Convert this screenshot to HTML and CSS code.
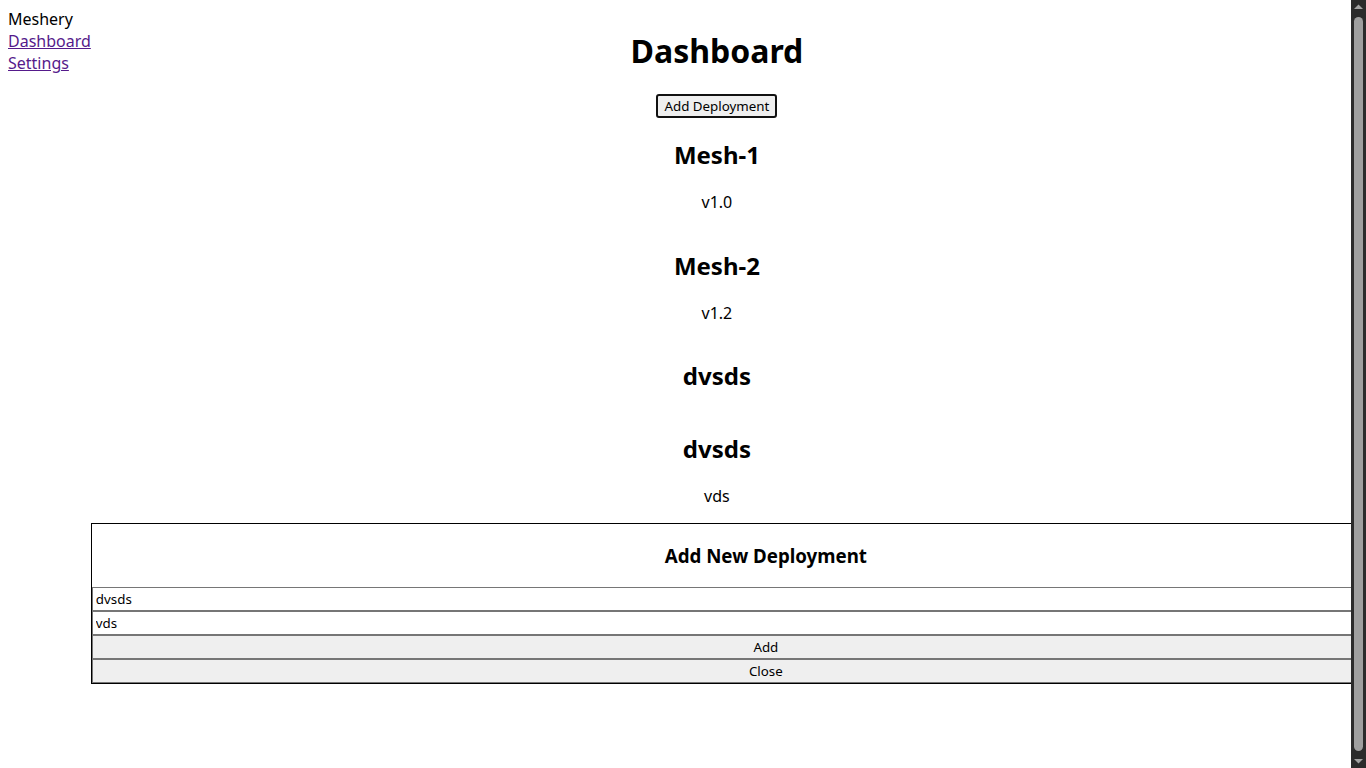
FILE: index.html
```html
<!DOCTYPE html>
<html lang="en">
<head>
<meta charset="utf-8">
<title>Meshery</title>
<link rel="stylesheet" href="styles.css">
</head>
<body>
<div class="layout">
  <nav class="sidebar">
    <div class="brand">Meshery</div>
    <a class="nav-link" href="#">Dashboard</a>
    <a class="nav-link" href="#">Settings</a>
  </nav>
  <main class="main">
    <h1 class="title">Dashboard</h1>
    <div class="actions"><button class="btn-add" type="button">Add Deployment</button></div>
    <div class="list">
      <div class="item"><h2>Mesh-1</h2><p>v1.0</p></div>
      <div class="item"><h2>Mesh-2</h2><p>v1.2</p></div>
      <div class="item"><h2>dvsds</h2><p></p></div>
      <div class="item"><h2>dvsds</h2><p>vds</p></div>
    </div>
    <div class="modal">
      <h3>Add New Deployment</h3>
      <input class="field" type="text" value="dvsds">
      <input class="field" type="text" value="vds">
      <button class="wide-btn" type="button">Add</button>
      <button class="wide-btn" type="button">Close</button>
    </div>
  </main>
</div>
<div class="scrollbar" aria-hidden="true">
  <svg class="arrow" width="15" height="15" viewBox="0 0 15 15"><path d="M3 9 L7.5 4.5 L12 9 Z" fill="#a3a3a3"/></svg>
  <div class="track"><div class="thumb"></div></div>
  <svg class="arrow" width="15" height="15" viewBox="0 0 15 15"><path d="M3 6 L7.5 10.5 L12 6 Z" fill="#a3a3a3"/></svg>
</div>
</body>
</html>
```

FILE: styles.css
```css
html {
  background: #fff;
}
body {
  margin: 8px 0 8px 8px;
  padding-right: 23px;
  font-family: "Noto Sans", sans-serif;
  font-size: 16px;
  color: #000;
  background: #fff;
}
.layout {
  display: flex;
  min-height: 100vh;
}
.sidebar {
  flex: none;
  display: flex;
  flex-direction: column;
}
.nav-link {
  color: #551a8b;
}
.main {
  flex: 1;
  min-width: 0;
  text-align: center;
}
.title {
  font-size: 32px;
  margin: 21.44px 0;
}
.btn-add {
  font-family: "Noto Sans", sans-serif;
  font-size: 13.333px;
  background: #efefef;
  color: #000;
  border: 2px solid #111;
  border-radius: 3px;
  padding: 0 6px;
  height: 24px;
}
.list {
  display: flex;
  flex-direction: column;
}
.item h2 {
  font-size: 24px;
  margin: 19.92px 0;
}
.item p {
  margin: 16px 0;
}
.modal {
  width: 1348px;
  border: 1px solid #000;
  display: flex;
  flex-direction: column;
  text-align: center;
}
.modal h3 {
  font-size: 18.72px;
  margin: 18.72px 0;
}
.field {
  box-sizing: border-box;
  width: 100%;
  height: 24px;
  margin: 0;
  border: 1px solid #767676;
  padding: 1px 3px;
  font-family: "Noto Sans", sans-serif;
  font-size: 13.333px;
  color: #000;
  background: #fff;
}
.wide-btn {
  box-sizing: border-box;
  width: 100%;
  height: 24px;
  margin: 0;
  border: 1px solid #767676;
  background: #efefef;
  color: #000;
  font-family: "Noto Sans", sans-serif;
  font-size: 13.333px;
  padding: 0;
}
.scrollbar {
  position: fixed;
  top: 0;
  right: 0;
  width: 15px;
  height: 100vh;
  background: #2b2b2b;
  display: flex;
  flex-direction: column;
  z-index: 10;
}
.arrow {
  flex: none;
  display: block;
}
.track {
  flex: 1;
  padding: 2px 3px;
  display: flex;
}
.thumb {
  flex: 1;
  background: #9f9f9f;
  border-radius: 5px;
}
```
